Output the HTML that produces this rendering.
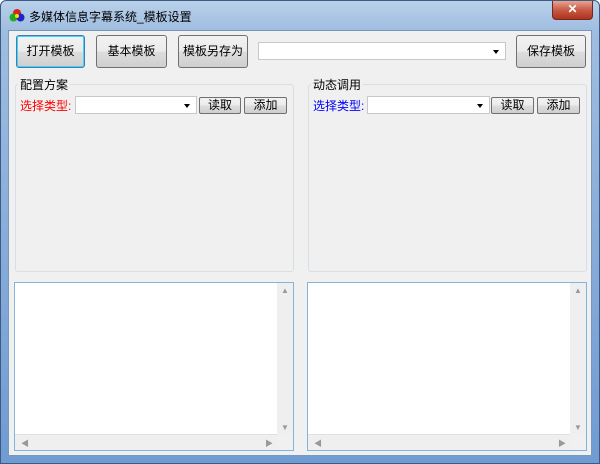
<!DOCTYPE html><html><head><meta charset="utf-8"><style>
*{box-sizing:border-box;margin:0;padding:0}
body{width:600px;height:464px;overflow:hidden;background:#fff;font-family:"Liberation Sans","Noto Sans CJK SC",sans-serif;font-size:12px;position:relative}
.win{position:absolute;left:0;top:0;width:600px;height:464px;border-radius:6px 6px 0 0;background:linear-gradient(180deg,#b9d1ea 0,#9fbde0 30px,#6f9bd3 100%);border:1px solid #3d5a80}
.title{position:absolute;left:28px;top:7px;font-size:12px;color:#000}
.close{position:absolute;left:551px;top:0;width:41px;height:19px;border:1px solid #6d2a22;border-top:none;border-radius:0 0 4px 4px;background:linear-gradient(#e8a493,#c75a45 50%,#b0321c);color:#fff;text-align:center;font-weight:bold;font-size:12px;line-height:17px}
.client{position:absolute;left:8px;top:30px;width:584px;height:426px;background:#f0f0f0;border:1px solid #7a96b8}
.a{position:absolute}
.btn{position:absolute;border:1px solid #707070;border-radius:3px;background:linear-gradient(#f2f2f2 0,#ebebeb 50%,#dddddd 51%,#cfcfcf 100%);text-align:center;font-size:12px;color:#000}
.big{height:33px;line-height:31px}
.sm{height:17px;line-height:15px;border-radius:2px}
.combo{position:absolute;background:#fff;border:1px solid #c8c8c8;height:18px}
.combo:after{content:"";position:absolute;right:6px;top:7px;border:3.5px solid transparent;border-top:4px solid #000}
.grp{position:absolute;border:1px solid #d5dfe5;border-radius:3px}
.gl{position:absolute;background:#f0f0f0;padding:0 2px;font-size:12px}
.ta{position:absolute;background:#fff;border:1px solid #82b4dc}
.vs{position:absolute;right:0;top:0;width:16px;bottom:16px;background:#efefef}
.hs{position:absolute;left:0;bottom:0;right:16px;height:16px;background:#efefef;border-top:1px solid #e0e0e0}
.cr{position:absolute;right:0;bottom:0;width:16px;height:16px;background:#f0f0f0}
.t{position:absolute;font-size:8px;color:#999}
</style></head><body>
<div class="win">
<svg class="a" style="left:8px;top:7px" width="16" height="14"><circle cx="8" cy="5" r="4" fill="#d22"/><circle cx="4.5" cy="9.5" r="4" fill="#2a2"/><circle cx="11.5" cy="9.5" r="4" fill="#22c"/><circle cx="8" cy="8" r="2" fill="#fd0"/></svg>
<div class="title">多媒体信息字幕系统_模板设置</div>
<div class="close">✕</div>
</div>
<div class="client"></div>
<div class="btn big" style="left:16px;top:35px;width:69px;border-color:#3c7fb1;box-shadow:inset 0 0 0 1px #48d0f8">打开模板</div>
<div class="btn big" style="left:96px;top:35px;width:71px">基本模板</div>
<div class="btn big" style="left:178px;top:35px;width:70px">模板另存为</div>
<div class="combo" style="left:258px;top:42px;width:248px"></div>
<div class="btn big" style="left:516px;top:35px;width:70px">保存模板</div>

<div class="grp" style="left:15px;top:84px;width:279px;height:188px"></div>
<div class="gl" style="left:18px;top:76px">配置方案</div>
<div class="a" style="left:20px;top:97px;color:#f00">选择类型:</div>
<div class="combo" style="left:75px;top:96px;width:122px"></div>
<div class="btn sm" style="left:199px;top:97px;width:42px">读取</div>
<div class="btn sm" style="left:244px;top:97px;width:43px">添加</div>

<div class="grp" style="left:308px;top:84px;width:279px;height:188px"></div>
<div class="gl" style="left:311px;top:76px">动态调用</div>
<div class="a" style="left:313px;top:97px;color:#00f">选择类型:</div>
<div class="combo" style="left:367px;top:96px;width:123px"></div>
<div class="btn sm" style="left:491px;top:97px;width:43px">读取</div>
<div class="btn sm" style="left:537px;top:97px;width:43px">添加</div>

<div class="ta" style="left:14px;top:282px;width:280px;height:169px"><div class="vs"><span class="t" style="left:4px;top:3px">▲</span><span class="t" style="left:4px;bottom:2px">▼</span></div><div class="hs"><span class="t" style="left:6px;top:3px">◀</span><span class="t" style="right:4px;top:3px">▶</span></div><div class="cr"></div></div>
<div class="ta" style="left:307px;top:282px;width:280px;height:169px"><div class="vs"><span class="t" style="left:4px;top:3px">▲</span><span class="t" style="left:4px;bottom:2px">▼</span></div><div class="hs"><span class="t" style="left:6px;top:3px">◀</span><span class="t" style="right:4px;top:3px">▶</span></div><div class="cr"></div></div>
</body></html>
